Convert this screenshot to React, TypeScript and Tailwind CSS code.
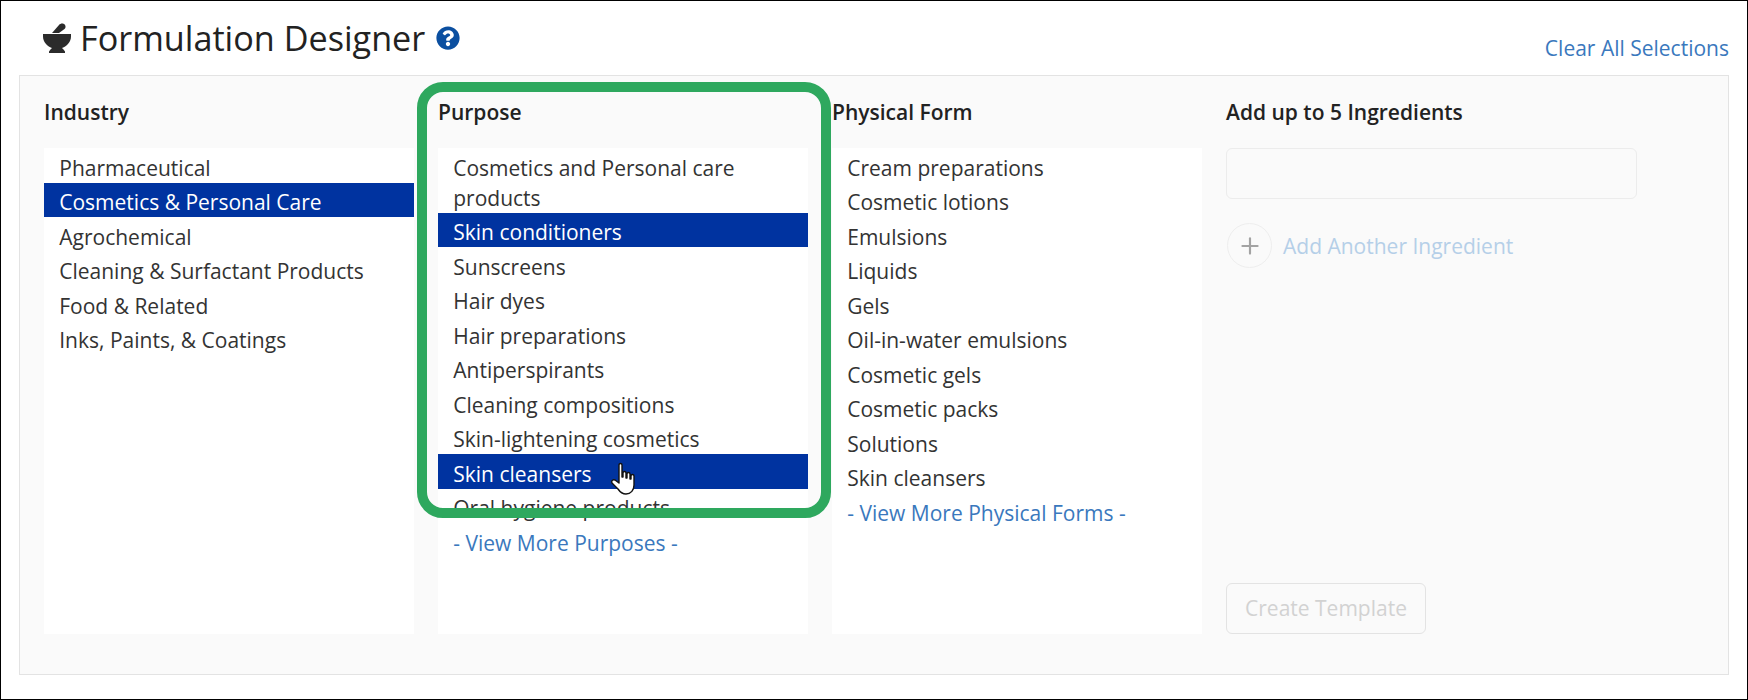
import React from 'react';
import { FaQuestionCircle } from 'react-icons/fa';
import { Plus } from 'lucide-react';

const industries = [
  'Pharmaceutical',
  'Cosmetics & Personal Care',
  'Agrochemical',
  'Cleaning & Surfactant Products',
  'Food & Related',
  'Inks, Paints, & Coatings',
];

const purposes = [
  'Cosmetics and Personal care products',
  'Skin conditioners',
  'Sunscreens',
  'Hair dyes',
  'Hair preparations',
  'Antiperspirants',
  'Cleaning compositions',
  'Skin-lightening cosmetics',
  'Skin cleansers',
  'Oral hygiene products',
];

const forms = [
  'Cream preparations',
  'Cosmetic lotions',
  'Emulsions',
  'Liquids',
  'Gels',
  'Oil-in-water emulsions',
  'Cosmetic gels',
  'Cosmetic packs',
  'Solutions',
  'Skin cleansers',
];

function OptionColumn({ title, items, selected, more }: { title: string; items: string[]; selected: string[]; more?: string }) {
  return (
    <div className="w-[370px] shrink-0">
      <h3 className="text-[21px] leading-[30px] font-semibold text-[#222]">{title}</h3>
      <ul className="mt-[21px] h-[486px] bg-white pt-[0.25px]">
        {items.map((item) => (
          <li
            key={item}
            className={`px-[15.25px] pt-[4.5px] text-[21px] leading-[30px] ${selected.includes(item) ? 'bg-[#0033a0] text-white' : 'text-[#333]'}`}
          >
            {item}
          </li>
        ))}
        {more && <li className="px-[15.25px] pt-[4.5px] text-[21px] leading-[30px] text-[#3a78bd]">{more}</li>}
      </ul>
    </div>
  );
}

export default function App() {
  return (
    <div className="relative h-[700px] w-[1748px] border border-black bg-white font-['Open_Sans','Noto_Sans',sans-serif]">
      {/* Header */}
      <div className="flex h-[74px] items-start justify-between pr-[18px] pl-[41px]">
        <div className="flex items-center pt-[15px]">
          <svg className="h-[30px] w-[30px] text-[#2b2b2b]" viewBox="0 0 30 30" fill="currentColor">
            <path d="M10 10 17 2c1.5-2 5-2 6 0 1 1.5.5 3-.5 4L17 10z" />
            <path d="M1 11h28v2.5C29 19 25 23 20 25c1 1 2 2 3 3.5V30H7v-1.5c1-1.5 2-2.5 3-3.5C5 23 1 19 1 13.5z" />
          </svg>
          <h1 className="ml-[8px] text-[34.2px] leading-[44px] text-[#222]">Formulation Designer</h1>
          <FaQuestionCircle className="ml-[11px] h-[24px] w-[24px] text-[#0b4fa0]" />
        </div>
        <a className="mt-[32px] text-[21px] leading-[30px] text-[#3a78bd]">Clear All Selections</a>
      </div>

      {/* Panel */}
      <div className="mr-[18px] ml-[18px] flex h-[600px] gap-[24px] border border-[#e3e3e3] bg-[#fafafa] pt-[21px] pl-[24px]">
        <OptionColumn title="Industry" items={industries} selected={['Cosmetics & Personal Care']} />
        <OptionColumn title="Purpose" items={purposes} selected={['Skin conditioners', 'Skin cleansers']} more="- View More Purposes -" />
        <OptionColumn title="Physical Form" items={forms} selected={[]} more="- View More Physical Forms -" />

        <div className="flex w-[411px] shrink-0 flex-col">
          <h3 className="text-[21px] leading-[30px] font-semibold text-[#222]">Add up to 5 Ingredients</h3>
          <div className="mt-[21px] h-[51px] rounded-[6px] border border-[#ececec] bg-[#fafafa]" />
          <div className="mt-[24px] flex items-center">
            <div className="ml-[1px] flex h-[45px] w-[45px] items-center justify-center rounded-full border border-[#eeeeee]">
              <Plus className="h-[26px] w-[26px] text-[#a3a3a3]" strokeWidth={2} />
            </div>
            <span className="ml-[11px] text-[21px] leading-[30px] text-[#b5cfe8]">Add Another Ingredient</span>
          </div>
          <button className="mt-auto mb-[40px] h-[51px] w-[200px] rounded-[6px] border border-[#e3e3e3] text-[21px] text-[#d2d2d2]">
            Create Template
          </button>
        </div>
      </div>

      {/* Callout around the Purpose column */}
      <div className="pointer-events-none absolute top-[81px] left-[416px] h-[436px] w-[414px] rounded-[26px] border-[10px] border-[#2ea85e]" />

      {/* Hand cursor */}
      <svg className="absolute top-[461px] left-[610px]" width="28" height="34" viewBox="0 0 28 34">
        <path
          d="M8 3c0-2 3-2 3 0v12l1 0V11c0-2 3-2 3 0v5h1v-4c0-2 3-2 3 0v5h1v-3c0-2 3-2 3 0v9c0 5-3 9-8 9-4 0-6-2-8-5l-6-6c-1-2 1-4 3-3l4 3V3z"
          fill="#fff"
          stroke="#111"
          strokeWidth="1.4"
          strokeLinejoin="round"
        />
      </svg>
    </div>
  );
}
